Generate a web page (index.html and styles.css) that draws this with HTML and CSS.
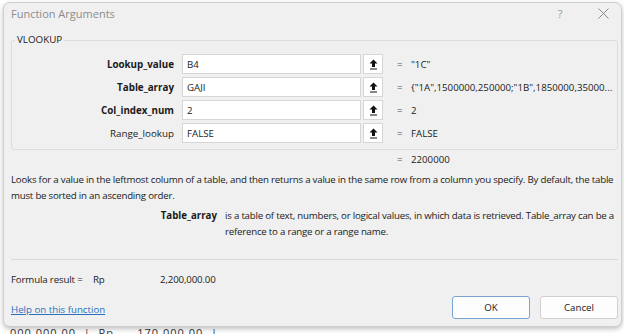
FILE: index.html
```html
<!DOCTYPE html>
<html lang="en">
<head>
    <meta charset="UTF-8" />
    <title>Function Arguments</title>
    <link rel="stylesheet" href="styles.css">
</head>
<body>
    <div class="sheet-strip">000.000,00 &nbsp;| &nbsp;Rp &nbsp; &nbsp; &nbsp;170.000,00 &nbsp;|</div>

    <div class="dialog">
        <!-- Title bar -->
        <div class="titlebar">
            <span class="title">Function Arguments</span>
            <span class="title-btn title-help">?</span>
            <span class="title-btn title-close">
                <svg width="11" height="11" viewBox="0 0 11 11"><path d="M0.5 0.5 L10.5 10.5 M10.5 0.5 L0.5 10.5" stroke="#8a8a8a" stroke-width="1" fill="none"/></svg>
            </span>
        </div>

        <div class="body">
            <!-- Arguments group -->
            <fieldset class="group">
                <legend class="group-name">VLOOKUP</legend>

                <div class="arg-row">
                    <label class="arg-label bold">Lookup_value</label>
                    <div class="arg-input">B4</div>
                    <button class="ref-btn"><svg width="9" height="11" viewBox="0 0 9 11"><path d="M4.5 0.5 L8.5 4.5 L6 4.5 L6 8 L3 8 L3 4.5 L0.5 4.5 Z" fill="#111"/><rect x="1" y="9.5" width="7" height="1" fill="#111"/></svg></button>
                    <span class="eq">=</span>
                    <span class="arg-value">"1C"</span>
                </div>
                <div class="arg-row">
                    <label class="arg-label bold">Table_array</label>
                    <div class="arg-input">GAJI</div>
                    <button class="ref-btn"><svg width="9" height="11" viewBox="0 0 9 11"><path d="M4.5 0.5 L8.5 4.5 L6 4.5 L6 8 L3 8 L3 4.5 L0.5 4.5 Z" fill="#111"/><rect x="1" y="9.5" width="7" height="1" fill="#111"/></svg></button>
                    <span class="eq">=</span>
                    <span class="arg-value">{"1A",1500000,250000;"1B",1850000,35000...</span>
                </div>
                <div class="arg-row">
                    <label class="arg-label bold">Col_index_num</label>
                    <div class="arg-input">2</div>
                    <button class="ref-btn"><svg width="9" height="11" viewBox="0 0 9 11"><path d="M4.5 0.5 L8.5 4.5 L6 4.5 L6 8 L3 8 L3 4.5 L0.5 4.5 Z" fill="#111"/><rect x="1" y="9.5" width="7" height="1" fill="#111"/></svg></button>
                    <span class="eq">=</span>
                    <span class="arg-value">2</span>
                </div>
                <div class="arg-row">
                    <label class="arg-label">Range_lookup</label>
                    <div class="arg-input">FALSE</div>
                    <button class="ref-btn"><svg width="9" height="11" viewBox="0 0 9 11"><path d="M4.5 0.5 L8.5 4.5 L6 4.5 L6 8 L3 8 L3 4.5 L0.5 4.5 Z" fill="#111"/><rect x="1" y="9.5" width="7" height="1" fill="#111"/></svg></button>
                    <span class="eq">=</span>
                    <span class="arg-value">FALSE</span>
                </div>
            </fieldset>

            <div class="result-row">
                <span class="eq">=</span>
                <span class="arg-value">2200000</span>
            </div>

            <p class="desc">Looks for a value in the leftmost column of a table, and then returns a value in the same row from a column you specify. By default, the table must be sorted in an ascending order.</p>

            <div class="arg-help">
                <span class="arg-help-name">Table_array</span>
                <span class="arg-help-text">is a table of text, numbers, or logical values, in which data is retrieved. Table_array can be a reference to a range or a range name.</span>
            </div>

            <div class="separator"></div>

            <div class="formula-result">
                <span class="fr-label">Formula result =</span>
                <span class="fr-cur">Rp</span>
                <span class="fr-value">2,200,000.00</span>
            </div>

            <div class="footer">
                <a class="help-link" href="#">Help on this function</a>
                <div class="buttons">
                    <button class="btn btn-ok">OK</button>
                    <button class="btn">Cancel</button>
                </div>
            </div>
        </div>
    </div>
</body>
</html>
```

FILE: styles.css
```css
/* Global */
* {
    box-sizing: border-box;
}

html,
body {
    margin: 0;
    padding: 0;
}

body {
    width: 624px;
    height: 334px;
    overflow: hidden;
    background: #ffffff;
    font-family: 'Open Sans', 'Noto Sans', sans-serif;
    font-size: 9.7px;
    color: #1a1a1a;
    position: relative;
}

/* Sheet behind the dialog */
.sheet-strip {
    position: absolute;
    left: 10px;
    top: 325px;
    font-size: 11px;
    color: #333;
    letter-spacing: 1px;
}

/* Dialog */
.dialog {
    position: relative;
    margin: 2px 2px 0 3px;
    height: 325px;
    background: #f0f0f0;
    border: 1px solid #cfcfcf;
    border-radius: 7px;
    box-shadow: 0 2px 5px rgba(0, 0, 0, 0.25);
    display: flex;
    flex-direction: column;
}

.titlebar {
    height: 21px;
    display: flex;
    align-items: center;
    padding: 0 0 0 7px;
}

.title {
    flex: 1;
    font-size: 11px;
    color: #8c8c8c;
}

.title-btn {
    text-align: center;
    color: #9a9a9a;
    font-size: 11px;
}

.title-help {
    width: 50px;
}

.title-close {
    width: 36px;
    display: flex;
    justify-content: center;
    align-items: center;
}

.body {
    flex: 1;
    padding: 0 3px 0 7px;
    display: flex;
    flex-direction: column;
}

/* Arguments group */
.group {
    margin: 9px 0 0 0;
    padding: 7px 0 3px 0;
    border: 1px solid #dcdcdc;
    border-radius: 3px;
}

.group-name {
    margin-left: 3px;
    padding: 0 2px;
    font-size: 9.8px;
    line-height: 14px;
    color: #1a1a1a;
}

.arg-row {
    display: flex;
    align-items: center;
    height: 20px;
    margin-bottom: 3px;
}

.arg-label {
    width: 170px;
    text-align: right;
    font-size: 9.8px;
    padding-right: 8px;
}

.bold {
    font-weight: 700;
}

.arg-input {
    width: 179px;
    height: 20px;
    background: #ffffff;
    border: 1px solid #d6d6d6;
    padding: 0 0 0 4px;
    display: flex;
    align-items: center;
}

.ref-btn {
    width: 20px;
    height: 20px;
    margin-left: 2px;
    padding: 0;
    border: 1px solid #d6d6d6;
    background: #ffffff;
    display: flex;
    justify-content: center;
    align-items: center;
}

.eq {
    width: 14px;
    margin-left: 14px;
    color: #555;
}

.result-row {
    display: flex;
    height: 18px;
    align-items: center;
    padding-left: 372px;
}

/* Description */
.desc {
    margin: 4px 0 0 0;
    line-height: 16px;
    letter-spacing: -0.22px;
}

.arg-help {
    display: flex;
    margin-top: 4px;
    line-height: 16px;
}

.arg-help-name {
    width: 214px;
    text-align: right;
    font-weight: 700;
    padding-right: 8px;
    flex-shrink: 0;
}

.arg-help-text {
    letter-spacing: -0.22px;
}

.separator {
    margin-top: 19px;
    border-top: 1px solid #dadada;
}

.formula-result {
    display: flex;
    height: 28px;
    margin-top: 5px;
    align-items: center;
    letter-spacing: -0.15px;
}

.fr-label {
    width: 82px;
}

.fr-cur {
    width: 67px;
}

.footer {
    display: flex;
    align-items: center;
    justify-content: space-between;
    margin-top: 3px;
    height: 23px;
}

.help-link {
    color: #2a6fbe;
    padding-top: 3px;
}

.buttons {
    display: flex;
    gap: 10px;
}

.btn {
    width: 78px;
    height: 23px;
    background: #fdfdfd;
    border: 1px solid #d0d0d0;
    border-radius: 3px;
    font-family: 'Open Sans', 'Noto Sans', sans-serif;
    font-size: 9.7px;
    color: #1a1a1a;
}

.btn-ok {
    border-color: #7aa4d4;
}
```
